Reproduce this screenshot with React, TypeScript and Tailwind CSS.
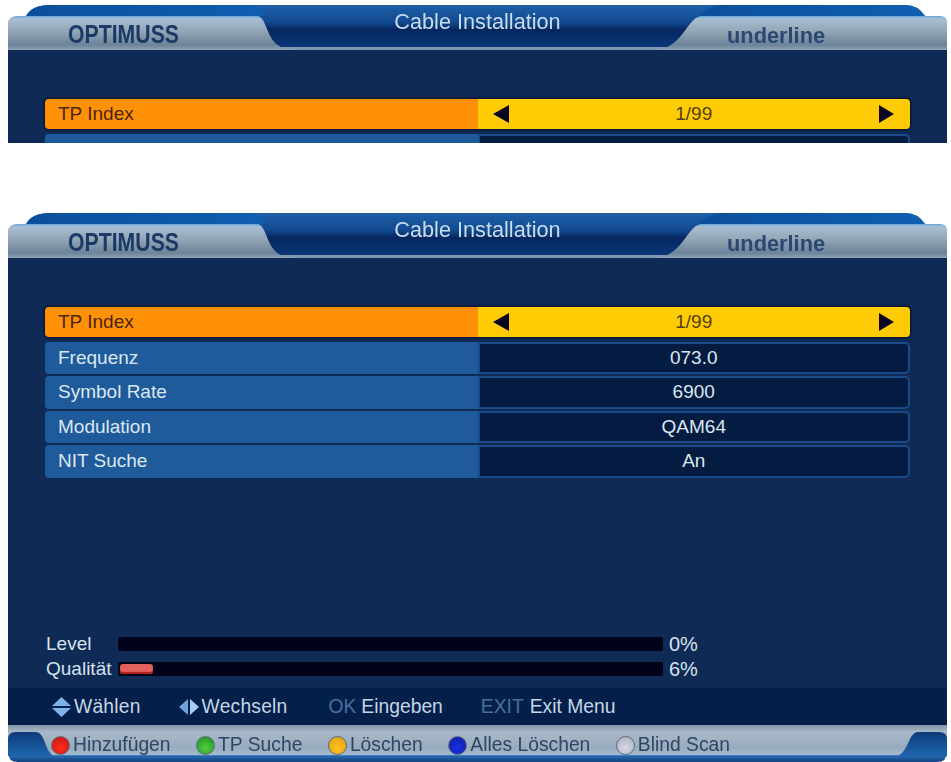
import React from "react";

const rows = [
  ["Frequenz", "073.0"],
  ["Symbol Rate", "6900"],
  ["Modulation", "QAM64"],
  ["NIT Suche", "An"],
];

function HeaderArt() {
  return (
    <svg className="absolute inset-0 h-full w-full" viewBox="0 0 939 45" preserveAspectRatio="none">
      <defs>
        <linearGradient id="ctr" x1="0" y1="0" x2="0" y2="1">
          <stop offset="0" stopColor="#1d5fa8" />
          <stop offset="0.38" stopColor="#124a90" />
          <stop offset="0.55" stopColor="#06275f" />
          <stop offset="1" stopColor="#0a3a7c" />
        </linearGradient>
        <linearGradient id="band" x1="0" y1="0" x2="1" y2="0">
          <stop offset="0" stopColor="#0b4f9c" />
          <stop offset="1" stopColor="#0f5fb0" />
        </linearGradient>
        <linearGradient id="silver" x1="0" y1="0" x2="0" y2="1">
          <stop offset="0" stopColor="#5fa5e0" />
          <stop offset="0.08" stopColor="#a8bfd2" />
          <stop offset="0.45" stopColor="#93a5b6" />
          <stop offset="0.85" stopColor="#6d8399" />
          <stop offset="1" stopColor="#8da2b6" />
        </linearGradient>
      </defs>
      <path d="M18 11 Q24 0 42 0 H897 Q910 0 917 11 V45 H18 Z" fill="url(#ctr)" />
      <path d="M18 11 Q24 0 42 0 H242 Q252 2 258 11 Z" fill="url(#band)" />
      <path d="M917 11 Q910 0 897 0 H712 Q700 1 692 11 Z" fill="url(#band)" />
      <rect x="0" y="42" width="939" height="3" fill="#7f98b0" />
      <path d="M0 45 V19 Q0 11 10 11 H250 C260 14 258 38 276 43 L284 45 Z" fill="url(#silver)" />
      <path d="M939 45 V17 Q939 11 932 11 H692 C678 16 676 38 652 45 Z" fill="url(#silver)" />
    </svg>
  );
}

function FooterArt() {
  return (
    <svg className="absolute inset-0 h-full w-full" viewBox="0 0 939 37" preserveAspectRatio="none">
      <defs>
        <linearGradient id="fs" x1="0" y1="0" x2="0" y2="1">
          <stop offset="0" stopColor="#7f95a9" />
          <stop offset="0.2" stopColor="#aab9c8" />
          <stop offset="0.6" stopColor="#98abbe" />
          <stop offset="0.8" stopColor="#a5bace" />
          <stop offset="0.83" stopColor="#2a6cb4" />
          <stop offset="1" stopColor="#0f3f7e" />
        </linearGradient>
        <linearGradient id="fb" x1="0" y1="0" x2="0" y2="1">
          <stop offset="0" stopColor="#0d3b78" />
          <stop offset="1" stopColor="#1f66ae" />
        </linearGradient>
      </defs>
      <path d="M0 0 H939 V27 Q939 37 929 37 H10 Q0 37 0 27 Z" fill="url(#fs)" />
      <path d="M0 14 Q0 7 8 7 H28 C38 8 36 26 46 31 H0 Z" fill="url(#fb)" />
      <path d="M939 14 Q939 7 931 7 H910 C900 8 902 24 890 31 H939 Z" fill="url(#fb)" />
    </svg>
  );
}

function Dot({ from, to }: { from: string; to: string }) {
  return (
    <span
      className="inline-block h-[19px] w-[19px] shrink-0 rounded-full border border-[#5b6b7c]"
      style={{ background: `radial-gradient(circle at 50% 65%, ${from}, ${to})` }}
    />
  );
}

function Screen() {
  return (
    <div className="flex h-[549px] shrink-0 flex-col">
      <div className="relative h-[45px] shrink-0">
        <HeaderArt />
        <div className="absolute left-[60px] top-[15px] origin-left scale-x-[0.85] text-[25px] font-bold leading-[28px] text-[#1b3a68]">
          OPTIMUSS
        </div>
        <div className="absolute inset-x-0 top-[4px] text-center text-[21.7px] leading-[26px] text-[#c9dcec]">
          Cable Installation
        </div>
        <div className="absolute left-[719px] top-[18px] text-[21.8px] font-bold leading-[26px] text-[#2b4870]">
          underline
        </div>
      </div>
      <div className="flex flex-1 flex-col bg-[#0e2a55] px-[37px] pt-[49px]">
        <div className="flex flex-col gap-[4.5px]">
          <div className="grid h-[30px] grid-cols-2 overflow-hidden rounded-[4px] text-[19px] shadow-[0_0_2px_1px_#0a1020]">
            <div className="flex items-center bg-[#ff9108] pl-[13px] text-[#4c2410]">TP Index</div>
            <div className="flex items-center justify-between bg-[#ffcb05] px-[15px] text-[#54400e]">
              <svg width="17" height="18" viewBox="0 0 17 18"><path d="M16 0 V18 L0 9 Z" fill="#0a0820" /></svg>
              <span>1/99</span>
              <svg width="17" height="18" viewBox="0 0 17 18"><path d="M1 0 V18 L16 9 Z" fill="#0a0820" /></svg>
            </div>
          </div>
          {rows.map(([label, value]) => (
            <div key={label} className="grid h-[30px] grid-cols-2 text-[19px] text-[#dbe7f1]">
              <div className="flex items-center rounded-l-[4px] bg-[#1f5a9b] pl-[13px]">{label}</div>
              <div className="flex items-center justify-center rounded-r-[5px] border-2 border-[#1a4a88] bg-[#051c42]">{value}</div>
            </div>
          ))}
        </div>
        <div className="mt-auto mb-[12px] flex flex-col gap-[11px] text-[19px] leading-[14px] text-[#d5e2ee]">
          <div className="flex h-[14px] items-center">
            <span className="w-[73px] pl-px">Level</span>
            <div className="h-[14px] w-[545px] rounded-[2px] bg-[#01031a]" />
            <span className="ml-[6px] text-[20px]">0%</span>
          </div>
          <div className="flex h-[14px] items-center">
            <span className="w-[73px] pl-px">Qualität</span>
            <div className="flex h-[14px] w-[545px] items-center rounded-[2px] bg-[#01031a] pl-[2px]">
              <div className="h-[10px] w-[33px] rounded-[3px] bg-[#e2605e] shadow-[inset_0_-2px_1px_#b11c1c]" />
            </div>
            <span className="ml-[6px] text-[20px]">6%</span>
          </div>
        </div>
      </div>
      <div className="flex h-[37px] shrink-0 items-center gap-[38px] bg-[#04204a] pl-[44px] pt-px text-[19.3px] text-[#c6d6e6]">
        <div className="flex items-center gap-[3px] tracking-[0.2px]">
          <svg width="19" height="20" viewBox="0 0 19 20">
            <path d="M9.5 0 L19 9 H0 Z" fill="#7fb2e8" />
            <path d="M9.5 20 L19 11 H0 Z" fill="#7fb2e8" />
          </svg>
          <span>Wählen</span>
        </div>
        <div className="flex items-center gap-[3px] tracking-[0.2px]">
          <svg width="20" height="16" viewBox="0 0 20 16">
            <path d="M9 0 V16 L0 8 Z" fill="#6ea3dc" />
            <path d="M11 0 V16 L20 8 Z" fill="#a8cdf0" />
          </svg>
          <span>Wechseln</span>
        </div>
        <div className="ml-[3px] flex items-center gap-[5px]">
          <span className="text-[#4a6f9e]">OK</span>
          <span>Eingeben</span>
        </div>
        <div className="flex items-center gap-[6px]">
          <span className="text-[#4a6f9e]">EXIT</span>
          <span>Exit Menu</span>
        </div>
      </div>
      <div className="relative h-[37px] shrink-0">
        <FooterArt />
        <div className="relative flex h-[30px] translate-y-[5px] items-center gap-[25.5px] pl-[43px] text-[19.3px] text-[#2f4563]">
          <div className="flex items-center gap-[3px]"><Dot from="#ff3020" to="#c81010" /><span>Hinzufügen</span></div>
          <div className="flex items-center gap-[3px]"><Dot from="#50d040" to="#1f8a20" /><span>TP Suche</span></div>
          <div className="flex items-center gap-[3px]"><Dot from="#ffc020" to="#e0a010" /><span>Löschen</span></div>
          <div className="flex items-center gap-[3px]"><Dot from="#1830e0" to="#1020a0" /><span>Alles Löschen</span></div>
          <div className="flex items-center gap-[3px]"><Dot from="#d8d8e8" to="#a8aebc" /><span>Blind Scan</span></div>
        </div>
      </div>
    </div>
  );
}

export default function App() {
  return (
    <div className="h-[762px] w-[951px] overflow-hidden bg-white pl-[8px] pr-[4px] pt-[5px] font-['Liberation_Sans',Arial,sans-serif]">
      <div className="h-[138px] overflow-hidden blur-[0.7px]">
        <Screen />
      </div>
      <div className="mt-[70px] h-[549px] overflow-hidden blur-[0.7px]">
        <Screen />
      </div>
    </div>
  );
}
